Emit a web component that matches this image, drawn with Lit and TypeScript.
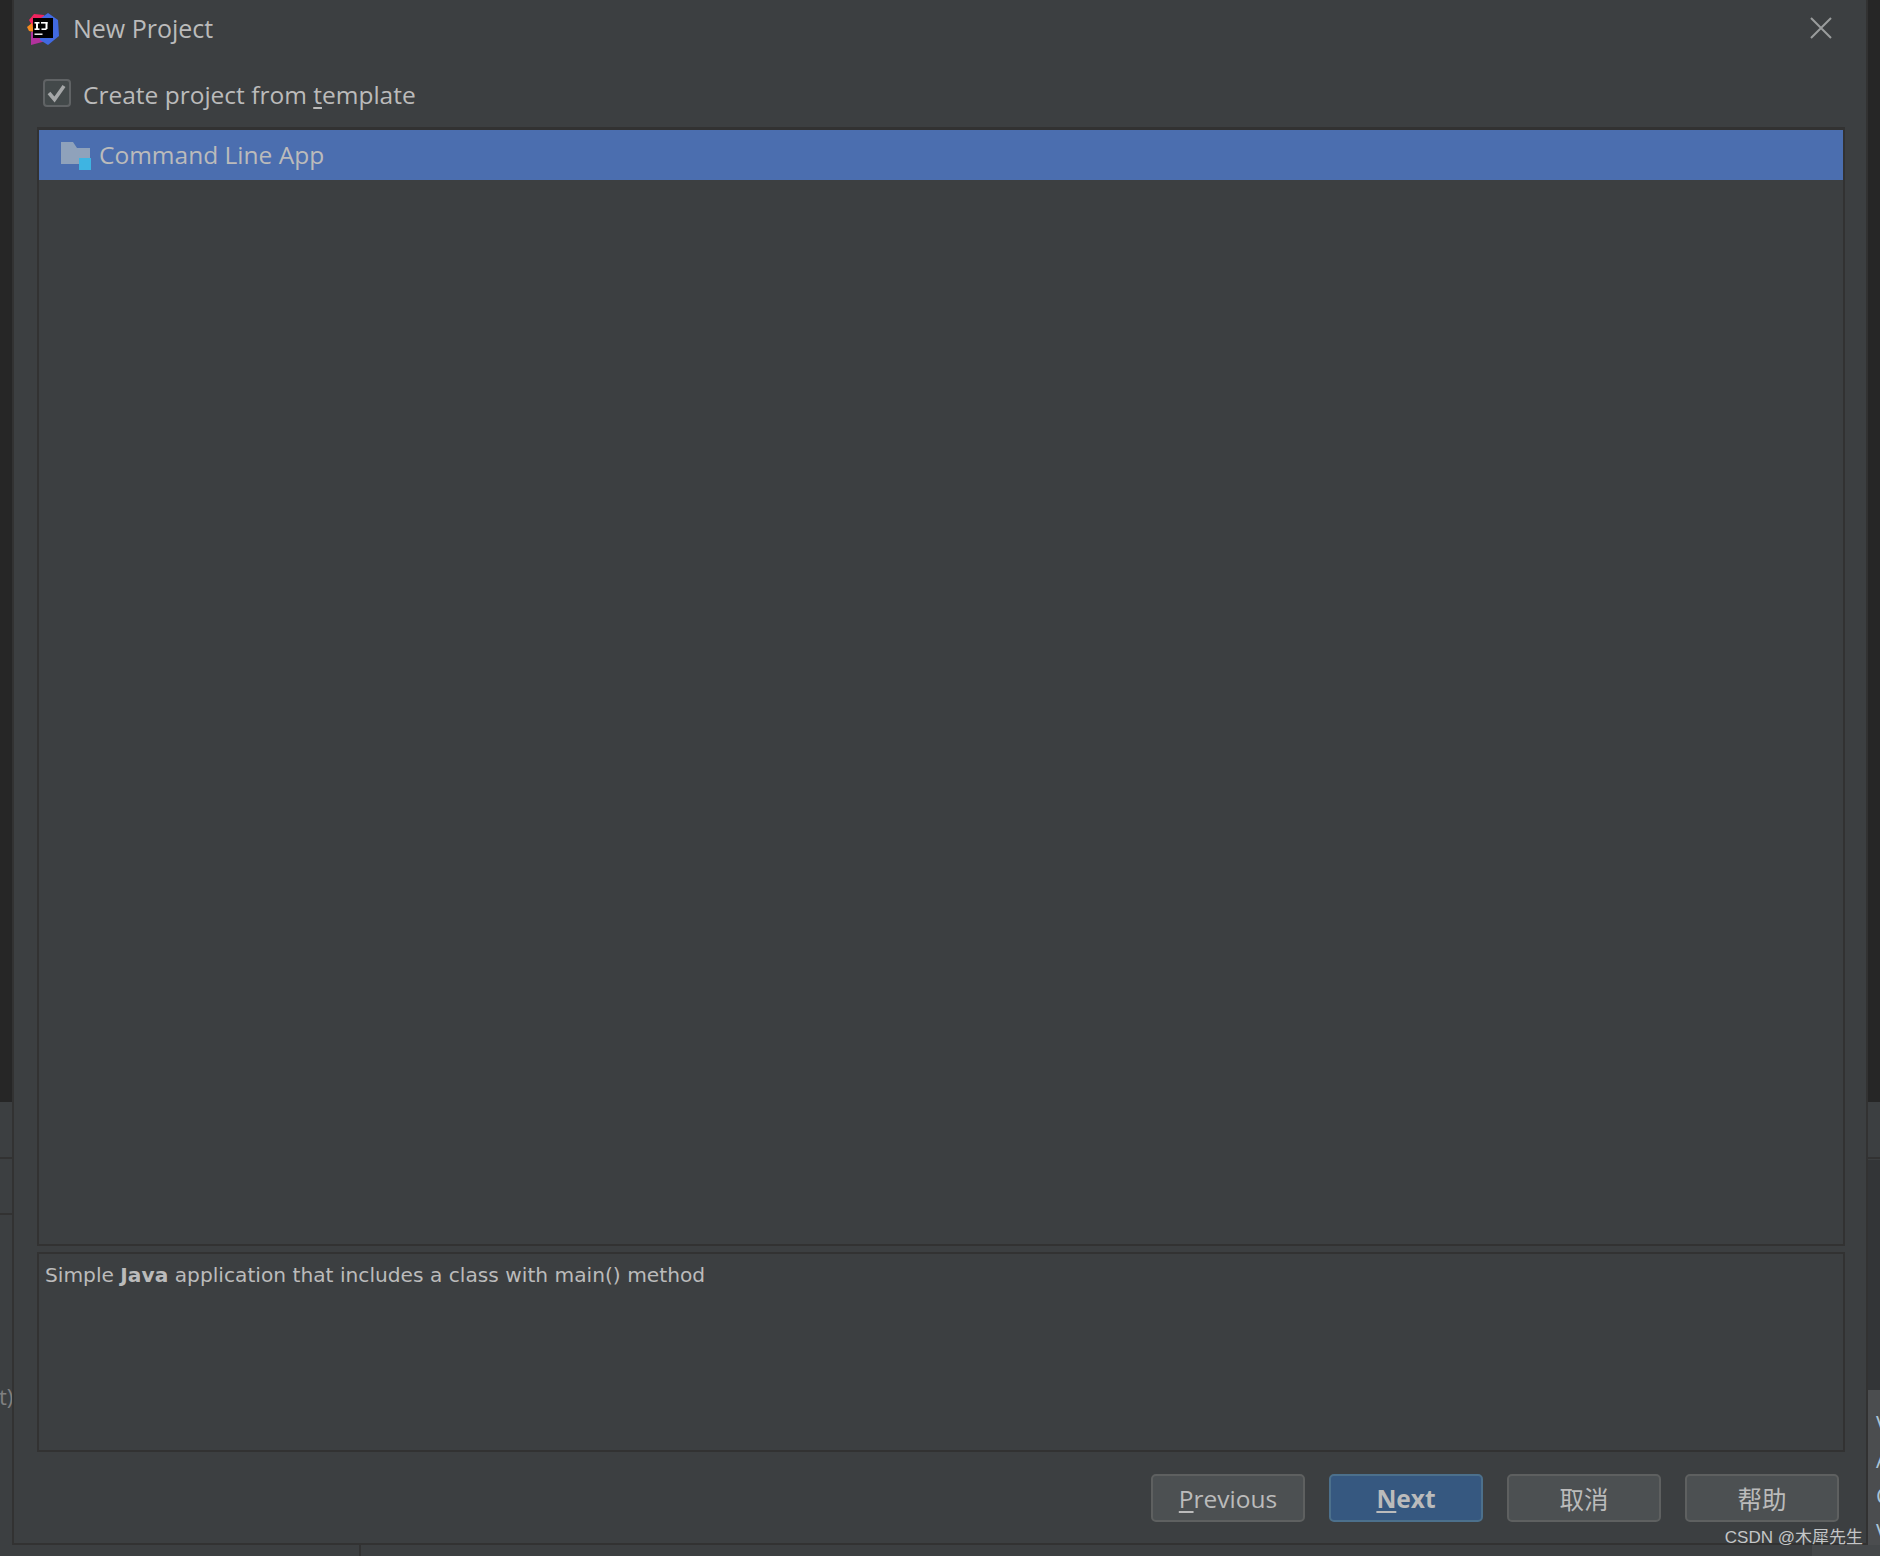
import { LitElement, html, css } from "lit";
import { customElement } from "lit/decorators.js";

@customElement("app-root")
export class AppRoot extends LitElement {
  static styles = css`
    :host {
      display: block;
      position: relative;
      width: 1880px;
      height: 1556px;
      overflow: hidden;
      background: #3c3f41;
      font-family: "Open Sans", "Noto Sans", sans-serif;
      color: #bbbbbb;
    }
    .bg { position: absolute; }
    .bg-top { left: 0; top: 0; width: 1880px; height: 1102px; background: #262626; }
    .bg-l1 { left: 0; top: 1157px; width: 12px; height: 2px; background: #323232; }
    .bg-l2 { left: 0; top: 1213px; width: 12px; height: 2px; background: #323232; }
    .bg-r1 { left: 1868px; top: 1157px; width: 12px; height: 2px; background: #323232; }
    .bg-r2 { left: 1868px; top: 1160px; width: 12px; height: 230px; background: #333537; }
    .bg-r3 { left: 1868px; top: 1390px; width: 12px; height: 166px; background: #4b4d4f; }
    .bg-r4 { left: 1812px; top: 1545px; width: 68px; height: 11px; background: #45484a; }
    .bg-v { left: 359px; top: 1544px; width: 2px; height: 12px; background: #323232; }
    .frag { position: absolute; font-family: "Open Sans", sans-serif; font-size: 22px; line-height: 26px; }
    .frag-t { left: -1px; top: 1383px; color: #808080; }
    .frag-r { left: 1876px; top: 1405px; color: #a9c3d6; font-size: 22px; line-height: 36px; white-space: pre; }

    .dialog {
      position: absolute;
      left: 12px;
      top: 0;
      width: 1856px;
      height: 1545px;
      box-sizing: border-box;
      background: #3c3f41;
      border-left: 2px solid #323232;
      border-right: 2px solid #323232;
      border-bottom: 2px solid #323232;
      display: flex;
      flex-direction: column;
      padding: 0 21px 0 23px;
    }
    .title {
      height: 56px;
      margin-left: -12px;
      display: flex;
      align-items: center;
      font-size: 25px;
      color: #bbbbbb;
    }
    .logo { width: 34px; height: 34px; margin: 2px 13px 0 1px; flex: none; }
    .spacer { flex: 1; }
    .close { width: 24px; height: 24px; margin: 0 12px 0 0; flex: none; }
    .check {
      height: 71px;
      box-sizing: border-box;
      display: flex;
      align-items: center;
      padding: 4px 0 0 6px;
      font-size: 24.5px;
    }
    .check-label { margin-top: 2px; }
    .box {
      width: 28px;
      height: 28px;
      box-sizing: border-box;
      border: 2px solid #606365;
      border-radius: 4px;
      background: #43494a;
      margin-right: 12px;
      margin-top: -1px;
      display: flex;
      align-items: center;
      justify-content: center;
      flex: none;
    }
    u { text-underline-offset: 3px; text-decoration-thickness: 2px; }
    .list {
      height: 1119px;
      box-sizing: border-box;
      border: 2px solid #323232;
      border-top-width: 3px;
    }
    .row {
      height: 50px;
      background: #4b6eaf;
      display: flex;
      align-items: center;
      padding-left: 22px;
      font-size: 24.5px;
    }
    .folder { width: 32px; height: 28px; margin: 2px 6px 0 0; flex: none; }
    .row-label { margin-bottom: 2px; }
    .desc {
      height: 200px;
      margin-top: 6px;
      box-sizing: border-box;
      border: 2px solid #323232;
      padding: 8px 6px;
      font-family: "DejaVu Sans", sans-serif;
      font-size: 20.2px;
      line-height: 26px;
      color: #bbbbbb;
    }
    .buttons {
      display: flex;
      justify-content: flex-end;
      gap: 24px;
      margin-top: 22px;
      padding-right: 6px;
    }
    .btn {
      width: 154px;
      height: 48px;
      box-sizing: border-box;
      border: 2px solid #5e6060;
      border-radius: 5px;
      background: #4c5052;
      display: flex;
      align-items: center;
      justify-content: center;
      font-size: 24.5px;
      color: #bbbbbb;
      font-family: "Open Sans", "Noto Sans CJK SC", sans-serif;
    }
    .primary {
      background: #365880;
      border-color: #4c708c;
      font-weight: 700;
    }
    .mark {
      position: absolute;
      right: 17px;
      bottom: 7px;
      font-family: "Liberation Sans", "Noto Sans CJK SC", sans-serif;
      font-size: 17px;
      line-height: 22px;
      color: #c4c6c7;
    }
  `;

  render() {
    return html`
      <div class="bg bg-top"></div>
      <div class="bg bg-l1"></div>
      <div class="bg bg-l2"></div>
      <div class="bg bg-r2"></div>
      <div class="bg bg-r1"></div>
      <div class="bg bg-r3"></div>
      <div class="bg bg-r4"></div>
      <div class="bg bg-v"></div>
      <div class="frag frag-t">t)</div>
      <div class="frag frag-r">V
A
C
V</div>
      <div class="dialog">
        <div class="title">
          <svg class="logo" viewBox="0 0 34 34">
            <polygon points="3,8 8,2 18,3 20,14 8,17" fill="#f0245f"></polygon>
            <polygon points="1,15 6,11 8,20 3,19" fill="#f58a1f"></polygon>
            <polygon points="5,20 18,18 20,29 5,33" fill="#b2329d"></polygon>
            <polygon points="15,6 22,1 32,8 33,24 22,33 14,28" fill="#4169e1"></polygon>
            <rect x="7" y="6" width="20" height="20" fill="#000"></rect>
            <rect x="8.5" y="10" width="5" height="1.6" fill="#fff"></rect>
            <rect x="8.5" y="16.4" width="5" height="1.6" fill="#fff"></rect>
            <rect x="10" y="10" width="2" height="8" fill="#fff"></rect>
            <rect x="19.5" y="10" width="2" height="7" fill="#fff"></rect>
            <rect x="15" y="10" width="6.5" height="1.6" fill="#fff"></rect>
            <rect x="15.5" y="16.4" width="5" height="1.6" fill="#fff"></rect>
            <rect x="8.5" y="21.5" width="8" height="1.4" fill="#fff"></rect>
          </svg>
          <span>New Project</span>
          <span class="spacer"></span>
          <svg class="close" viewBox="0 0 24 24">
            <path d="M2 2 L22 22 M22 2 L2 22" stroke="#9a9c9d" stroke-width="2" fill="none"></path>
          </svg>
        </div>
        <div class="check">
          <span class="box">
            <svg width="20" height="20" viewBox="0 0 20 20">
              <path d="M2 10 L7.5 16.5 L17 3" stroke="#a5a7a8" stroke-width="3.6" fill="none"></path>
            </svg>
          </span>
          <span class="check-label">Create project from <u>t</u>emplate</span>
        </div>
        <div class="list">
          <div class="row">
            <svg class="folder" viewBox="0 0 32 28">
              <path d="M0 0 H12 L16 6 H29 V22 H0 Z" fill="#8fa2bb"></path>
              <rect x="18" y="16" width="12" height="12" fill="#3eb4e2"></rect>
            </svg>
            <span class="row-label">Command Line App</span>
          </div>
        </div>
        <div class="desc">Simple <b>Java</b> application that includes a class with main() method</div>
        <div class="buttons">
          <div class="btn"><span><u>P</u>revious</span></div>
          <div class="btn primary"><span><u>N</u>ext</span></div>
          <div class="btn">取消</div>
          <div class="btn">帮助</div>
        </div>
      </div>
      <div class="mark">CSDN @木犀先生</div>
    `;
  }
}
